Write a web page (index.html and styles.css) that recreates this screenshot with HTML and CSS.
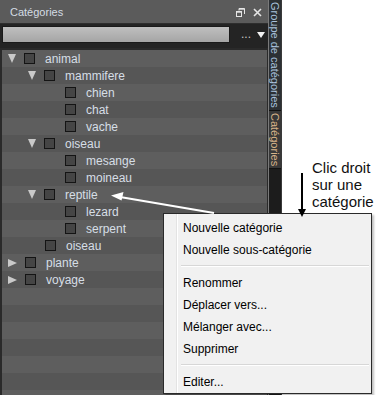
FILE: index.html
```html
<!DOCTYPE html>
<html lang="fr">
<head>
    <meta charset="UTF-8">
    <title>Catégories</title>
    <link rel="stylesheet" href="styles.css">
</head>
<body>
    <div class="screen">
        <section class="panel">
            <header class="title">
                <span>Catégories</span>
                <span class="win-btns">
                    <svg width="9" height="9" viewBox="0 0 9 9"><path d="M3 0.5h5.5v5.5M3 2.5V0.5M6.5 3v-0" fill="none" stroke="#e6e6e6"/><rect x="0.5" y="3.5" width="5" height="5" fill="none" stroke="#e6e6e6"/><rect x="0.5" y="3.5" width="5" height="1.2" fill="#e6e6e6"/><rect x="3" y="0.5" width="5.5" height="1.2" fill="#e6e6e6"/></svg>
                    <svg width="9" height="9" viewBox="0 0 9 9"><path d="M1 1l7 7M8 1l-7 7" stroke="#e6e6e6" stroke-width="1.6"/></svg>
                </span>
            </header>
            <div class="filter">
                <div class="search"></div>
                <span class="more">...</span>
                <span class="drop"></span>
            </div>
            <ul class="tree">
                <li class="row lvl0 open"><i class="twisty"></i><i class="box"></i>animal</li>
                <li class="row lvl1 open"><i class="twisty"></i><i class="box"></i>mammifere</li>
                <li class="row lvl2"><i class="twisty"></i><i class="box"></i>chien</li>
                <li class="row lvl2"><i class="twisty"></i><i class="box"></i>chat</li>
                <li class="row lvl2"><i class="twisty"></i><i class="box"></i>vache</li>
                <li class="row lvl1 open"><i class="twisty"></i><i class="box"></i>oiseau</li>
                <li class="row lvl2"><i class="twisty"></i><i class="box"></i>mesange</li>
                <li class="row lvl2"><i class="twisty"></i><i class="box"></i>moineau</li>
                <li class="row lvl1 open"><i class="twisty"></i><i class="box"></i>reptile</li>
                <li class="row lvl2"><i class="twisty"></i><i class="box"></i>lezard</li>
                <li class="row lvl2"><i class="twisty"></i><i class="box"></i>serpent</li>
                <li class="row lvl1"><i class="twisty"></i><i class="box"></i>oiseau</li>
                <li class="row lvl0 closed"><i class="twisty"></i><i class="box"></i>plante</li>
                <li class="row lvl0 closed"><i class="twisty"></i><i class="box"></i>voyage</li>
            </ul>
        </section>

        <aside class="tabs">
            <div class="tab">Groupe de catégories</div>
            <div class="tab current">Catégories</div>
        </aside>

        <div class="note">Clic droit<br>sur une<br>catégorie</div>

        <div class="menu">
            <div class="item">Nouvelle catégorie</div>
            <div class="item">Nouvelle sous-catégorie</div>
            <div class="sep"></div>
            <div class="item">Renommer</div>
            <div class="item">Déplacer vers...</div>
            <div class="item">Mélanger avec...</div>
            <div class="item">Supprimer</div>
            <div class="sep"></div>
            <div class="item">Editer...</div>
        </div>

        <svg class="arrows" width="390" height="395" viewBox="0 0 390 395">
            <line x1="214" y1="213" x2="120" y2="197" stroke="#fff" stroke-width="2"/>
            <path d="M111 195.5l12.5-3.5-2 8.5z" fill="#fff"/>
            <line x1="302" y1="173" x2="302" y2="210" stroke="#000" stroke-width="2"/>
            <path d="M298 209h8l-4 8z" fill="#000"/>
        </svg>
    </div>
</body>
</html>
```

FILE: styles.css
```css
body,
html {
    margin: 0;
    padding: 0;
}

body {
    background-color: white;
    font-family: "Liberation Sans", Arial, sans-serif;
}

.screen {
    position: relative;
    display: flex;
    width: 390px;
    height: 395px;
    overflow: hidden;
}

/* left dock panel */
.panel {
    width: 268px;
    height: 395px;
    display: flex;
    flex-direction: column;
    background-color: #2a2a2a;
}

.title {
    height: 23px;
    border-bottom: 1px solid #2e2e2e;
    background-color: #5b5b5b;
    color: #d4dce4;
    font-size: 11px;
    display: flex;
    align-items: center;
    justify-content: space-between;
    padding: 0 6px 0 10px;
}

.win-btns {
    display: flex;
    gap: 8px;
    padding-top: 2px;
}

.win-btns svg {
    display: block;
}

.filter {
    height: 24px;
    display: flex;
    align-items: flex-start;
    background-color: #242424;
}

.search {
    width: 226px;
    height: 15px;
    margin: 2px 0 0 2px;
    border: 1px solid #1a1a1a;
    background: linear-gradient(#bfbfbf, #a5a5a5);
}

.more {
    color: #c4c4c4;
    font-size: 12px;
    margin: 3px 0 0 11px;
    letter-spacing: 0;
}

.drop {
    width: 0;
    height: 0;
    margin: 8px 0 0 6px;
    border-left: 4.5px solid transparent;
    border-right: 4.5px solid transparent;
    border-top: 6px solid #f2f2f2;
}

.tree {
    list-style: none;
    margin: 2px 1px 0 2px;
    padding: 0;
    flex: 1;
    background: repeating-linear-gradient(#5e5e5e 0 17px, #565656 17px 34px);
}

.row {
    height: 17px;
    display: flex;
    align-items: center;
    color: #d6dee6;
    font-size: 12px;
    padding-left: 6px;
}

.row.lvl1 {
    padding-left: 26px;
}

.row.lvl2 {
    padding-left: 46px;
}

.twisty {
    width: 9px;
    height: 9px;
    margin-right: 8px;
    position: relative;
    top: 1px;
}

.open .twisty {
    width: 0;
    height: 0;
    border-left: 4.5px solid transparent;
    border-right: 4.5px solid transparent;
    border-top: 9px solid #c9c9c9;
    top: 0;
}

.closed .twisty {
    width: 0;
    height: 0;
    border-top: 4.5px solid transparent;
    border-bottom: 4.5px solid transparent;
    border-left: 9px solid #c9c9c9;
    top: 0;
}

.box {
    width: 9px;
    height: 9px;
    border: 1px solid #141414;
    background-color: #454545;
    margin-right: 10px;
}

/* vertical tab strip */
.tabs {
    width: 14px;
    height: 395px;
    background-color: #1c1c1c;
    display: flex;
    flex-direction: column;
    border-left: 1px solid #7a7a7a;
    border-right: 1px solid #3a3a3a;
    box-sizing: border-box;
}

.tab {
    writing-mode: vertical-rl;
    font-size: 11px;
    line-height: 12px;
    color: #a9c2dc;
    background-color: #2c3034;
    padding: 2px 0 2px 0;
    border-bottom: 1px solid #111;
}

.tab.current {
    color: #d9b48a;
    background-color: #383838;
}

.note {
    margin-left: 30px;
    padding-top: 159px;
    font-size: 15px;
    line-height: 17px;
    color: #111;
}

/* context menu */
.menu {
    position: absolute;
    left: 163px;
    top: 213px;
    width: 207px;
    height: 176px;
    padding-top: 3px;
    border: 1px solid #2a2a2a;
    background: linear-gradient(to right, #f1f1f1 0 12px, #e3e3e3 12px 13px, #ffffff 13px 14px, #f1f1f1 14px);
    box-shadow: 2px 2px 2px rgba(0, 0, 0, 0.25);
    font-size: 12px;
    color: #000;
}

.item {
    height: 22px;
    line-height: 22px;
    padding-left: 19px;
}

.sep {
    height: 1px;
    margin: 4px 2px 5px 17px;
    background-color: #d7d7d7;
    border-bottom: 1px solid #fff;
}

.arrows {
    position: absolute;
    left: 0;
    top: 0;
    pointer-events: none;
}
```
